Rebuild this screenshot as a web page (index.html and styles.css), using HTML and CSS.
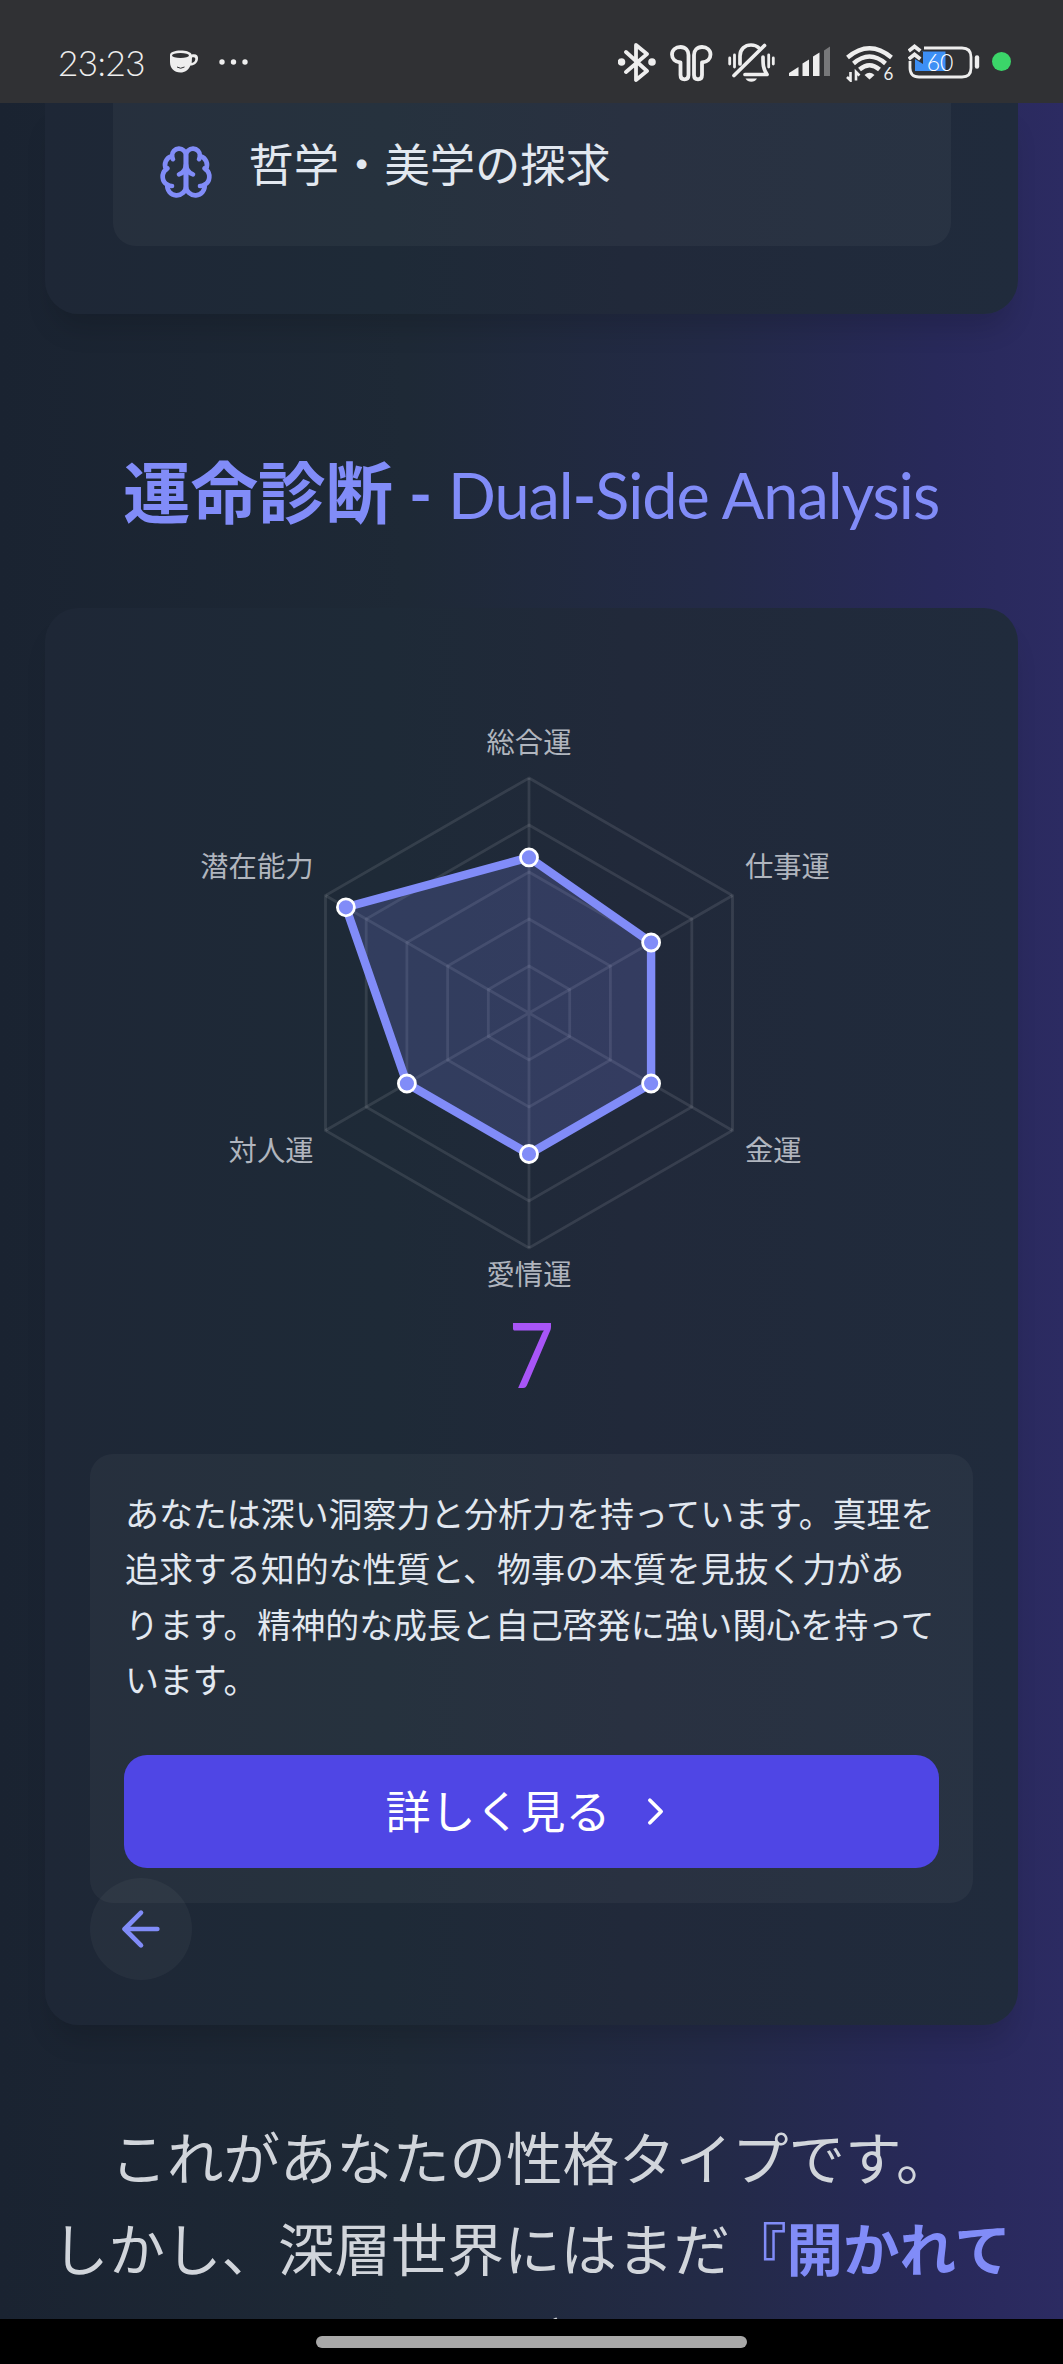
FILE: index.html
```
<!DOCTYPE html>
<html lang="ja">
<head>
  <meta charset="UTF-8" />
  <meta name="viewport" content="width=device-width, initial-scale=1" />
  <title>運命診断</title>
  <link rel="stylesheet" href="styles.css">
</head>
<body>
  <header class="status-bar">
    <div class="status-left">
      <span class="clock">23:23</span>
      <svg class="cup" width="30" height="24" viewBox="0 0 30 24">
        <path d="M1 5C1 2 6 .5 11.500 .5S22 2 22.500 4.500C27 3.500 29.500 5 29 9c-.5 4-3.500 6.500-7.500 6.500C19.500 20 16 22.500 11.500 22.500 5 22.500 1 18 1 12z" fill="#eee"/>
        <path d="M23 7.500c2-.8 3.500-.3 3.300 1.800-.2 2.200-1.600 3.400-3.600 3.700z" fill="#303134"/>
        <ellipse cx="11.500" cy="5.500" rx="8.500" ry="2.600" fill="#303134"/>
        <path d="M8 17q3.500 2.500 7.500 0" fill="none" stroke="#303134" stroke-width="1"/>
      </svg>
      <svg width="30" height="8" viewBox="0 0 30 8" fill="#eee">
        <circle cx="4" cy="4" r="2.700"/><circle cx="15.500" cy="4" r="2.700"/><circle cx="27" cy="4" r="2.700"/>
      </svg>
    </div>
    <div class="status-right">
      <!-- bluetooth -->
      <svg width="38" height="40" viewBox="0 0 38 40" fill="none" stroke="#eee" stroke-width="3.800" stroke-linejoin="round" stroke-linecap="round">
        <path d="M8 10l21 19-11 9V3l11 9L8 30"/>
        <circle cx="3.500" cy="20" r="1.900"/><circle cx="34" cy="20" r="1.900"/>
      </svg>
      <!-- earbuds -->
      <svg width="44" height="40" viewBox="0 0 44 40" fill="none" stroke="#eee" stroke-width="3.800" stroke-linejoin="round">
        <path d="M10.500 20.500C5 20 2 16.500 2 12.500 2 8 5.500 5 10.500 5S18.500 8.500 18.500 13v20c0 3-1.500 4.300-4 4.300s-4-1.300-4-4.300z"/>
        <path d="M32 20.500c5.500-.5 8.500-4 8.500-8C40.500 8 37 5 32 5S24 8.500 24 13v20c0 3 1.500 4.300 4 4.300s4-1.300 4-4.300z"/>
      </svg>
      <!-- muted bell -->
      <svg width="47" height="40" viewBox="0 0 47 40" fill="none" stroke="#eee" stroke-width="3.700" stroke-linecap="round" stroke-linejoin="round">
        <path d="M12 22v-8C12 7 17 3 23 3c3.500 0 6 1 8 3"/>
        <path d="M35 15c0 8 0 11 4 17.500H17"/>
        <path d="M36.500 3.500L6 33.500"/>
        <path d="M17.500 36.500h11.500q-2 3.300-5.700 3.300t-5.800-3.300z" fill="#eee" stroke="none"/>
        <path d="M1.700 16v6M6.500 13v12M45.300 16v6M40.700 13v12" stroke-width="2.800"/>
      </svg>
      <!-- mobile signal -->
      <svg width="43" height="40" viewBox="0 0 43 40" fill="#eee">
        <path d="M0 34v-3l9.500-6v9zM13.500 34V21.500l6.500-4V34zM24 34V14.500l6.500-4V34z"/>
        <path d="M35 34V8.500l6-4V34z" fill="#77787a"/>
      </svg>
      <!-- wifi 6 -->
      <svg width="48" height="40" viewBox="0 0 48 40" fill="none" stroke="#eee" stroke-width="4.400">
        <path d="M1.500 15.500Q23.500-3 45.500 15.500"/>
        <path d="M7.500 21.500Q23.500 7.500 39.500 21.500"/>
        <path d="M13.500 27.500Q23.500 19 33.500 27.500"/>
        <path d="M18.500 33q5-4.500 10 0l-5 4.500z" fill="#eee" stroke="none"/>
        <path d="M4.500 30v8.500L1 35M10 38.500V30l3.500 3.500" stroke-width="2.600"/>
        <text x="37.500" y="38" class="wifi-gen">6</text>
      </svg>
      <!-- battery -->
      <svg width="72" height="40" viewBox="0 0 72 40" fill="none" stroke="#eee" stroke-width="2.800">
        <path d="M7 9.500h30.500V29H7z" fill="#3d8ff5" stroke="none"/>
        <path d="M16 6h38q9 0 9 9v11q0 9-9 9H11q-9 0-9-9v-7"/>
        <path d="M69 15.500v9" stroke-width="4.400" stroke-linecap="round"/>
        <path d="M0 18v-8l6.500-6 8.500 6v12l-8-5z" fill="#303134" stroke="none"/>
        <path d="M.7 9l5.800-4.500L12.300 9M.7 17l5.800-4.500L12.300 17" stroke-width="3.800"/>
        <text x="32" y="28.500" class="battery-level">60</text>
      </svg>
      <span class="privacy-dot"></span>
    </div>
  </header>

  <main>
    <section class="card traits-card">
      <div class="trait">
        <svg class="trait-icon" viewBox="0 0 24 24" fill="none" stroke="currentColor" stroke-width="2" stroke-linecap="round" stroke-linejoin="round">
          <path d="M12 5a3 3 0 1 0-5.997.125 4 4 0 0 0-2.526 5.770 4 4 0 0 0 .556 6.588A4 4 0 1 0 12 18Z"/>
          <path d="M12 5a3 3 0 1 1 5.997.125 4 4 0 0 1 2.526 5.770 4 4 0 0 1-.556 6.588A4 4 0 1 1 12 18Z"/>
          <path d="M15 13a4.500 4.500 0 0 1-3-4 4.500 4.500 0 0 1-3 4"/>
          <path d="M17.599 6.500a3 3 0 0 0 .399-1.375"/>
          <path d="M6.003 5.125A3 3 0 0 0 6.401 6.500"/>
          <path d="M3.477 10.896a4 4 0 0 1 .585-.396"/>
          <path d="M19.938 10.500a4 4 0 0 1 .585.396"/>
          <path d="M6 18a4 4 0 0 1-1.967-.516"/>
          <path d="M19.967 17.484A4 4 0 0 1 18 18"/>
        </svg>
        <span>哲学・美学の探求</span>
      </div>
    </section>

    <h2 class="section-title"><span class="title-ja">運命診断</span><span class="title-dash">-</span><span class="title-en">Dual<b>-</b>Side Analysis</span></h2>

    <section class="card result-card">
      <svg class="radar" width="883" height="655" viewBox="0 0 883 655">
        <g class="radar-grid">
          <path d="M439 313l40.700 23.500v47L439 407l-40.700-23.500v-47z"/>
          <path d="M439 266l81.400 47v94L439 454l-81.400-47v-94z"/>
          <path d="M439 219l122.100 70.500v141L439 501l-122.100-70.500v-141z"/>
          <path d="M439 172l162.800 94v188L439 548l-162.800-94V266z"/>
          <path d="M439 125l203.500 117.500v235L439 595 235.500 477.500v-235z"/>
          <path d="M439 125v470M235.500 242.500l407 235M642.500 242.500l-407 235"/>
        </g>
        <path class="radar-area" d="M439 204.400L561.100 289.500V430.500L439 501 316.900 430.500 255.900 254.300z"/>
        <g class="radar-points">
          <circle cx="439" cy="204.400" r="8.500"/>
          <circle cx="561.100" cy="289.500" r="8.500"/>
          <circle cx="561.100" cy="430.500" r="8.500"/>
          <circle cx="439" cy="501" r="8.500"/>
          <circle cx="316.900" cy="430.500" r="8.500"/>
          <circle cx="255.900" cy="254.300" r="8.500"/>
        </g>
        <g class="radar-labels">
          <text x="439" y="99.500" text-anchor="middle">総合運</text>
          <text x="655" y="224">仕事運</text>
          <text x="655" y="507.500">金運</text>
          <text x="439" y="632" text-anchor="middle">愛情運</text>
          <text x="223.500" y="507.500" text-anchor="end">対人運</text>
          <text x="223.500" y="224" text-anchor="end">潜在能力</text>
        </g>
      </svg>
      <div class="number">7</div>

      <div class="description">
        <p>あなたは深い洞察力と分析力を持っています。真理を<br>追求する知的な性質と、物事の本質を見抜く力があ<br>ります。精神的な成長と自己啓発に強い関心を持って<br>います。</p>
        <button class="detail-btn">
          <span>詳しく見る</span>
          <svg width="45" height="45" viewBox="0 0 24 24" fill="none" stroke="currentColor" stroke-width="2" stroke-linecap="round" stroke-linejoin="round"><path d="m9 18 6-6-6-6"/></svg>
        </button>
      </div>

      <button class="back-btn" aria-label="戻る">
        <svg width="56" height="56" viewBox="0 0 24 24" fill="none" stroke="currentColor" stroke-width="2" stroke-linecap="round" stroke-linejoin="round"><path d="m12 19-7-7 7-7"/><path d="M19 12H5"/></svg>
      </button>
    </section>

    <div class="lead">
      <p>これがあなたの性格タイプです。</p>
      <p>しかし、深層世界にはまだ<strong>『開かれて</strong></p>
      <p class="lead-last"><strong>いない扉』</strong>があります。</p>
    </div>
  </main>

  <footer class="nav-bar"><span class="nav-handle"></span></footer>
</body>
</html>
```
FILE: styles.css
```
* {
  box-sizing: border-box;
}

body {
  margin: 0;
  width: 1063px;
  height: 2364px;
  display: flex;
  flex-direction: column;
  overflow: hidden;
  background: #000;
  font-family: "Noto Sans CJK JP", sans-serif;
  color: #e2e8f0;
}

.status-bar {
  flex: none;
  height: 103px;
  padding: 20px 52px 0 58px;
  display: flex;
  justify-content: space-between;
  align-items: center;
  background: #303134;
  color: #eee;
}

.status-left,
.status-right {
  display: flex;
  align-items: center;
}

.status-left {
  gap: 19px;
}

.status-right {
  gap: 14px;
}

.clock {
  width: 92px;
  font-family: Lato, sans-serif;
  font-size: 35px;
  font-weight: 300;
  line-height: 40px;
  letter-spacing: -0.500px;
  white-space: nowrap;
}

.wifi-gen,
.battery-level {
  font-family: Lato, sans-serif;
  font-weight: 400;
  fill: #eee;
  stroke: none;
}

.wifi-gen {
  font-size: 17px;
}

.battery-level {
  font-size: 23px;
  font-weight: 300;
  fill: #fff;
  text-anchor: middle;
}

.privacy-dot {
  width: 19px;
  height: 19px;
  margin-left: -2px;
  border-radius: 50%;
  background: #3bd569;
}

main {
  flex: none;
  height: 2216px;
  padding: 0 45px;
  overflow: hidden;
  background: linear-gradient(to right, #1a2331 0%, #1e2936 38%, #232a47 67%, #28295a 88%, #2c2b62 100%);
}

.card {
  background: linear-gradient(to right, #1e2736, #1e2a37 35%, #21293a 60%, #202b3c);
  border-radius: 34px;
  box-shadow: 0 22px 28px -8px rgba(0, 0, 0, 0.14);
}

.traits-card {
  padding: 0 67.500px 67.500px;
  border-radius: 0 0 34px 34px;
}

.trait {
  height: 143px;
  padding: 25px 45px 0;
  display: flex;
  align-items: flex-start;
  gap: 35px;
  border-radius: 0 0 23px 23px;
  background: rgba(255, 255, 255, 0.04);
  font-size: 45.300px;
  line-height: 68px;
}

.trait-icon {
  width: 56px;
  height: 56px;
  margin-top: 16px;
  color: #818cf8;
}

.section-title {
  margin: 138px 0 76px;
  height: 80px;
  padding-left: 78px;
  display: flex;
  align-items: center;
  color: #818cf8;
  font-size: 67.500px;
  line-height: 80px;
  font-weight: 700;
  white-space: nowrap;
}

.title-ja {
  padding-bottom: 6px;
}

.title-dash {
  width: 55px;
  text-align: center;
  font-family: Lato, sans-serif;
  font-size: 62px;
}

.title-en {
  padding-top: 6px;
  font-family: Lato, sans-serif;
  font-size: 63px;
  font-weight: 400;
  letter-spacing: -1px;
}

.result-card {
  height: 1417px;
  padding: 45px;
}

.radar {
  display: block;
}

.radar-grid {
  fill: none;
  stroke: rgba(255, 255, 255, 0.1);
  stroke-width: 2.800;
}

.radar-area {
  fill: rgba(129, 140, 248, 0.2);
  stroke: #818cf8;
  stroke-width: 8.400;
  stroke-linejoin: round;
}

.radar-points {
  fill: #818cf8;
  stroke: #fff;
  stroke-width: 2.800;
}

.radar-labels {
  font-size: 28.300px;
  fill: #b0b5be;
}

.number {
  height: 90px;
  margin-bottom: 56px;
  color: #a855f7;
  font-family: Lato, sans-serif;
  font-size: 92px;
  font-weight: 400;
  line-height: 90px;
  text-align: center;
  transform: scaleX(0.85);
}

.description {
  height: 449px;
  padding: 31.500px 34px 34px;
  border-radius: 23px;
  background: rgba(255, 255, 255, 0.04);
}

.description p {
  margin: 0 -10px 49px 1px;
  font-size: 33.950px;
  line-height: 55.300px;
  white-space: nowrap;
}

.detail-btn {
  width: 100%;
  height: 113px;
  display: flex;
  align-items: center;
  justify-content: center;
  gap: 22px;
  border: none;
  border-radius: 23px;
  background: #4f46e5;
  color: #fff;
  font-family: inherit;
  font-size: 45px;
}

.detail-btn span {
  padding-bottom: 5px;
}

.back-btn {
  position: relative;
  width: 102px;
  height: 102px;
  margin-top: -25px;
  padding: 0;
  display: flex;
  align-items: center;
  justify-content: center;
  border: none;
  border-radius: 50%;
  background: rgba(255, 255, 255, 0.04);
  color: #818cf8;
}

.lead {
  margin: 85px -45px 0;
  color: #d1d5db;
  font-size: 56.500px;
  line-height: 91.400px;
  text-align: center;
  white-space: nowrap;
}

.lead p {
  margin: 0;
}

.lead .lead-last {
  margin-top: 4px;
}

.lead strong {
  color: #818cf8;
  font-weight: 700;
}

.nav-bar {
  flex: none;
  height: 45px;
  padding-top: 17px;
  display: flex;
  justify-content: center;
  background: #000;
}

.nav-handle {
  width: 431px;
  height: 12px;
  border-radius: 6px;
  background: #a8a8a8;
}
```
